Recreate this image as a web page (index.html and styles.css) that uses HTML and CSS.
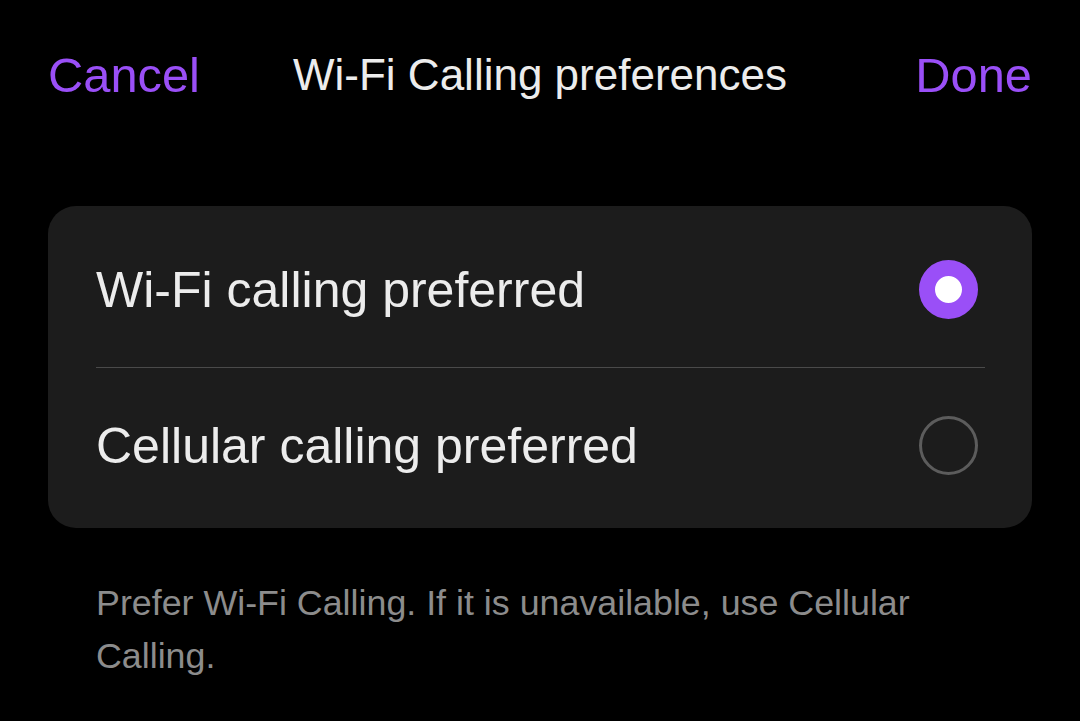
FILE: index.html
```html
<!DOCTYPE html>
<html lang="en">
<head>
<meta charset="utf-8">
<title>Wi-Fi Calling preferences</title>
<link rel="stylesheet" href="styles.css">
</head>
<body>
<div class="screen">
  <header class="nav">
    <span class="nav-btn">Cancel</span>
    <h1 class="nav-title">Wi-Fi Calling preferences</h1>
    <span class="nav-btn nav-done">Done</span>
  </header>

  <section class="card">
    <div class="row row-first">
      <span class="row-label">Wi-Fi calling preferred</span>
      <span class="radio radio-on"></span>
    </div>
    <div class="divider"></div>
    <div class="row row-last">
      <span class="row-label">Cellular calling preferred</span>
      <span class="radio"></span>
    </div>
  </section>

  <p class="footnote">Prefer Wi-Fi Calling. If it is unavailable, use Cellular Calling.</p>
</div>
</body>
</html>
```

FILE: styles.css
```css
html, body {
  margin: 0;
  padding: 0;
  background: #000;
}

body {
  font-family: "Liberation Sans", Arial, sans-serif;
  color: #ececec;
}

.screen {
  width: 1080px;
  height: 721px;
  overflow: hidden;
  box-sizing: border-box;
  padding: 0 48px;
}

.nav {
  display: grid;
  grid-template-columns: 1fr auto 1fr;
  align-items: baseline;
  padding-top: 45px;
  height: 60px;
  line-height: 60px;
}

.nav-btn {
  font-size: 48.8px;
  color: #9a4ff7;
}

.nav-done {
  justify-self: end;
}

.nav-title {
  margin: 0;
  font-size: 44px;
  font-weight: normal;
  color: #ececec;
  position: relative;
  top: -2px;
}

.card {
  margin-top: 101px;
  background: #1c1c1c;
  border-radius: 28px;
  padding: 0 47px 0 48px;
}

.row {
  display: flex;
  align-items: center;
  justify-content: space-between;
}

.row-first {
  height: 156px;
  padding-top: 5px;
}

.row-last {
  height: 154px;
  padding-bottom: 6px;
}

.row-label {
  font-size: 50px;
  color: #ececec;
  position: relative;
  top: 1px;
}

.divider {
  height: 1px;
  background: #4a4a4a;
}

.radio {
  width: 59px;
  height: 59px;
  box-sizing: border-box;
  border-radius: 50%;
  border: 3px solid #5c5c5c;
  margin-right: 7px;
}

.radio-on {
  border: 16px solid #9a4ff7;
  background: #fff;
}

.footnote {
  margin: 49px 0 0 48px;
  width: 880px;
  font-size: 35.8px;
  line-height: 53px;
  color: #8c8c8c;
}
```
